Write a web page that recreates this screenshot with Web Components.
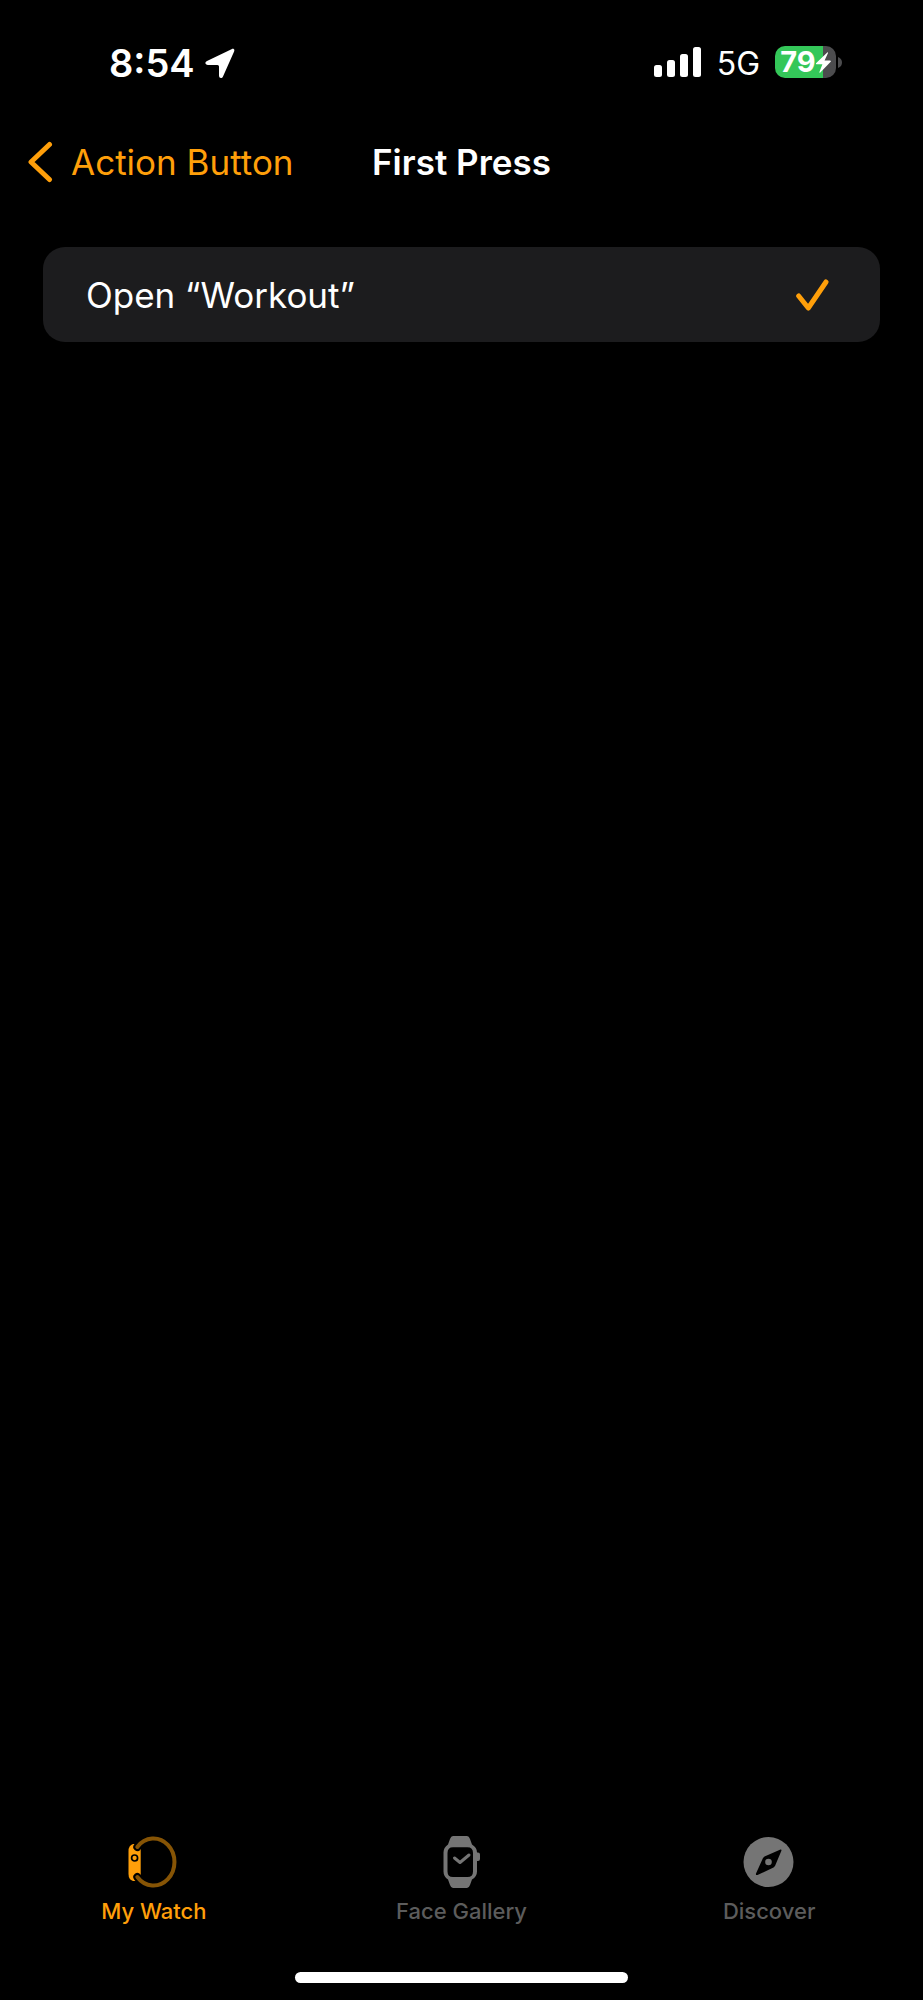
<!DOCTYPE html>
<html lang="en">
<head>
<meta charset="utf-8">
<meta name="viewport" content="width=device-width, initial-scale=1">
<title>First Press</title>
<style>
  html { background: #000; }
  body {
    margin: 0;
    color: #fff;
    font-family: Inter, "Liberation Sans", sans-serif;
    --accent: #ff9f0a;
    --muted: #757575;
    --muted-label: #5c5c5c;
    --card: #1c1c1e;
  }
</style>
</head>
<body>
<watch-screen>
  <status-bar slot="status" time="8:54" network="5G" battery="79"></status-bar>
  <nav-header slot="header" back="Action Button">First Press</nav-header>
  <option-row name="first-press" value="workout">Open “Workout”</option-row>
  <tab-bar slot="tabs">
    <tab-item icon="watch" active>My Watch</tab-item>
    <tab-item icon="face">Face Gallery</tab-item>
    <tab-item icon="compass">Discover</tab-item>
  </tab-bar>
</watch-screen>

<script>
class BaseElement extends HTMLElement {
  render(html) {
    if (!this.shadowRoot) this.attachShadow({ mode: 'open' });
    this.shadowRoot.innerHTML = html;
  }
}

customElements.define('watch-screen', class extends BaseElement {
  connectedCallback() {
    this.render(`
      <style>
        :host { display: flex; flex-direction: column; min-height: 100vh; background: #000; }
        main { flex: 1; padding: 47px 43px; }
        footer { display: flex; justify-content: center; padding: 47px 0 17px; }
        .home { width: 36%; height: 11px; border-radius: 6px; background: #fff; }
      </style>
      <slot name="status"></slot>
      <slot name="header"></slot>
      <main><slot></slot></main>
      <slot name="tabs"></slot>
      <footer><div class="home"></div></footer>`);
  }
});

customElements.define('status-bar', class extends BaseElement {
  connectedCallback() {
    const level = this.getAttribute('battery');
    this.render(`
      <style>
        :host { display: flex; justify-content: space-between; align-items: center; height: 124px; padding: 0 81px 0 109px; }
        .group { display: flex; align-items: center; }
        .clock { padding-top: 2px; }
        svg { display: block; }
        .time { font-size: 38px; line-height: 44px; font-weight: 600; margin-right: 10px; }
        .net { font-size: 32px; line-height: 40px; margin: 0 15px; padding-top: 4px; }
        .battery { display: flex; align-items: center; gap: 2px; }
        .cell { display: flex; align-items: center; justify-content: center; box-sizing: border-box;
          width: 61px; height: 32px; border-radius: 10px;
          background: linear-gradient(90deg, #34c759 ${level}%, #4c4c4e ${level}%); }
        .level { font-size: 29px; line-height: 32px; font-weight: 700; }
      </style>
      <div class="group clock">
        <span class="time">${this.getAttribute('time')}</span>
        <svg width="30" height="31" viewBox="0 0 30 31" aria-hidden="true"><path d="M2 13 26.500 1.200C28.700.200 30 1.500 29 3.700L18 28.500C17 30.800 14 30.500 14 27.500V18.500Q14 17 12.500 17H3C0 17-.5 14.200 2 13Z" fill="#fff"/></svg>
      </div>
      <div class="group">
        <svg width="48" height="30" viewBox="0 0 48 30" fill="#fff" aria-hidden="true">
          <rect x="0" y="18" width="8" height="12" rx="2.500"/><rect x="13" y="13" width="8" height="17" rx="2.500"/>
          <rect x="26" y="7" width="8" height="23" rx="2.500"/><rect x="39" y="0" width="8" height="30" rx="2.500"/>
        </svg>
        <span class="net">${this.getAttribute('network')}</span>
        <div class="battery">
          <div class="cell"><span class="level">${level}</span>
            <svg width="15" height="21" viewBox="0 0 14 21" preserveAspectRatio="none" aria-hidden="true"><path d="M10.500.4 0 11.200Q-.5 12 .5 12.200H6L3.200 20Q3 21.200 4 20.500L13.700 9.700Q14.300 8.700 13 8.500H8L11.200 1Q11.300 0 10.500.4Z" fill="#fff"/></svg>
          </div>
          <svg width="4" height="11" viewBox="0 0 4 11" aria-hidden="true"><path d="M0 0Q4 1.500 4 5.500T0 11Z" fill="#4c4c4e"/></svg>
        </div>
      </div>`);
  }
});

customElements.define('nav-header', class extends BaseElement {
  connectedCallback() {
    this.render(`
      <style>
        :host { display: grid; grid-template-columns: 1fr auto 1fr; align-items: center; height: 76px; padding: 0 28px; }
        a { display: flex; align-items: center; gap: 18px; color: var(--accent); text-decoration: none;
          font-size: 35px; line-height: 44px; white-space: nowrap; }
        h1 { margin: 0; font-size: 35px; line-height: 44px; font-weight: 600; }
      </style>
      <a href="#action-button">
        <svg width="25" height="42" viewBox="0 0 25 42" aria-hidden="true"><path d="M21.500 3.500 3 21 21.500 38.500" fill="none" stroke="currentColor" stroke-width="5" stroke-linecap="round" stroke-linejoin="round"/></svg>
        <span>${this.getAttribute('back')}</span>
      </a>
      <h1><slot></slot></h1>`);
  }
});

customElements.define('option-row', class extends BaseElement {
  connectedCallback() {
    this.render(`
      <style>
        :host { display: block; }
        label { display: flex; align-items: center; justify-content: space-between; height: 95px;
          padding: 0 51px 0 43px; border-radius: 22px; background: var(--card); font-size: 35px; line-height: 44px; }
        .mark { position: relative; width: 33px; height: 32px; color: var(--accent); }
        input { position: absolute; inset: 0; width: 100%; height: 100%; margin: 0; opacity: 0; }
        svg { display: block; visibility: hidden; }
        input:checked + svg { visibility: visible; }
      </style>
      <label>
        <span><slot></slot></span>
        <span class="mark">
          <input type="radio" checked name="${this.getAttribute('name')}" value="${this.getAttribute('value')}">
          <svg width="33" height="32" viewBox="0 0 33 32" aria-hidden="true"><path d="M2.700 17 12.300 29 30 3" fill="none" stroke="currentColor" stroke-width="5" stroke-linecap="round" stroke-linejoin="round"/></svg>
        </span>
      </label>`);
  }
});

customElements.define('tab-bar', class extends BaseElement {
  connectedCallback() {
    this.render(`
      <style>
        :host { display: block; }
        nav { display: grid; grid-template-columns: repeat(3, 1fr); }
      </style>
      <nav><slot></slot></nav>`);
  }
});

const TAB_ICONS = {
  watch: `
    <path d="M5 9H12.700V46H5Q.5 44.500 .5 39V16Q.5 10.500 5 9Z" fill="currentColor"/>
    <path d="M9.300 12A21 23.500 0 1 1 9.300 42" fill="none" stroke="#000" stroke-width="8" stroke-linecap="round"/>
    <path d="M9.300 12A21 23.500 0 1 1 9.300 42" fill="none" stroke="#865405" stroke-width="4" stroke-linecap="round"/>
    <circle cx="6.600" cy="23" r="3" fill="currentColor" stroke="#000" stroke-width="1.700"/>`,
  face: `
    <path d="M18 1H32Q34 1 35 4L37 9.500Q42 12.500 42 17.500H43Q45 17.500 45 19.500V24Q45 26 43 26H42V36.500Q42 41.500 37 44.500L35 50Q34 53 32 53H18Q16 53 15 50L13 44.500Q8.500 41.500 8.500 36.500V17.500Q8.500 12.500 13 9.500L15 4Q16 1 18 1ZM18 12.300Q12.500 12.300 12.500 18V36.500Q12.500 42 18 42H32.500Q38 42 38 36.500V18Q38 12.300 32.500 12.300Z" fill="currentColor" fill-rule="evenodd"/>
    <path d="M19.500 23 25 27.500 34 20" fill="none" stroke="currentColor" stroke-width="3" stroke-linecap="round" stroke-linejoin="round"/>`,
  compass: `
    <circle cx="25.500" cy="27" r="25" fill="currentColor"/>
    <path d="M37.500 14.500 21.500 21.500 20 23 13 38.500Q12.500 40.500 14.500 40L30.500 32.500 32 31 38.500 15.500Q38.500 14 37.500 14.500Z" fill="#000"/>
    <circle cx="25.500" cy="27" r="3.300" fill="currentColor"/>`
};

customElements.define('tab-item', class extends BaseElement {
  connectedCallback() {
    const active = this.hasAttribute('active');
    const icon = this.getAttribute('icon');
    this.render(`
      <style>
        :host { display: block; }
        a { display: flex; flex-direction: column; align-items: center; gap: 8px; text-decoration: none;
          color: var(--muted); font-size: 22px; line-height: 28px; font-weight: 500; }
        span { color: var(--muted-label); }
        a[aria-current], a[aria-current] span { color: var(--accent); }
        svg { display: block; }
      </style>
      <a href="#${icon}" ${active ? 'aria-current="page"' : ''}>
        <svg width="52" height="54" viewBox="0 0 52 54" aria-hidden="true">${TAB_ICONS[icon]}</svg>
        <span><slot></slot></span>
      </a>`);
  }
});
</script>
</body>
</html>
